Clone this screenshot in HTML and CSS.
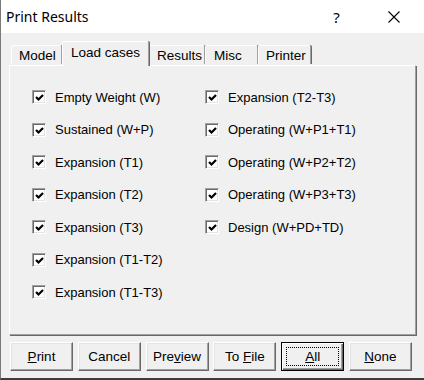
FILE: index.html
```html
<!DOCTYPE html>
<html lang="en">

<head>
    <meta charset="UTF-8">
    <title>Print Results</title>
    <link rel="stylesheet" href="styles.css">
</head>

<body>
    <div class="window">
        <div class="titlebar">
            <span class="title">Print Results</span>
            <div class="caption-btns">
                <span class="cap help">?</span>
                <span class="cap close">
                    <svg width="12" height="12" viewBox="0 0 12 12">
                        <path d="M0.5 0.5 L11.5 11.5 M11.5 0.5 L0.5 11.5" stroke="#000" stroke-width="1.1" fill="none"/>
                    </svg>
                </span>
            </div>
        </div>

        <div class="content">
            <div class="tabs">
                <div class="tab w-model">Model</div>
                <div class="tab active w-load">Load cases</div>
                <div class="tab w-results">Results</div>
                <div class="tab w-misc">Misc</div>
                <div class="tab w-printer">Printer</div>
            </div>

            <div class="panel">
                <div class="checks">
                    <label class="check"><span class="box"><svg width="9" height="9" viewBox="0 0 9 9"><polyline points="1,4 3.5,6.5 8,2" fill="none" stroke="#000" stroke-width="2.2"/></svg></span>Empty Weight (W)</label>
                    <label class="check"><span class="box"><svg width="9" height="9" viewBox="0 0 9 9"><polyline points="1,4 3.5,6.5 8,2" fill="none" stroke="#000" stroke-width="2.2"/></svg></span>Expansion (T2-T3)</label>
                    <label class="check"><span class="box"><svg width="9" height="9" viewBox="0 0 9 9"><polyline points="1,4 3.5,6.5 8,2" fill="none" stroke="#000" stroke-width="2.2"/></svg></span>Sustained (W+P)</label>
                    <label class="check"><span class="box"><svg width="9" height="9" viewBox="0 0 9 9"><polyline points="1,4 3.5,6.5 8,2" fill="none" stroke="#000" stroke-width="2.2"/></svg></span>Operating (W+P1+T1)</label>
                    <label class="check"><span class="box"><svg width="9" height="9" viewBox="0 0 9 9"><polyline points="1,4 3.5,6.5 8,2" fill="none" stroke="#000" stroke-width="2.2"/></svg></span>Expansion (T1)</label>
                    <label class="check"><span class="box"><svg width="9" height="9" viewBox="0 0 9 9"><polyline points="1,4 3.5,6.5 8,2" fill="none" stroke="#000" stroke-width="2.2"/></svg></span>Operating (W+P2+T2)</label>
                    <label class="check"><span class="box"><svg width="9" height="9" viewBox="0 0 9 9"><polyline points="1,4 3.5,6.5 8,2" fill="none" stroke="#000" stroke-width="2.2"/></svg></span>Expansion (T2)</label>
                    <label class="check"><span class="box"><svg width="9" height="9" viewBox="0 0 9 9"><polyline points="1,4 3.5,6.5 8,2" fill="none" stroke="#000" stroke-width="2.2"/></svg></span>Operating (W+P3+T3)</label>
                    <label class="check"><span class="box"><svg width="9" height="9" viewBox="0 0 9 9"><polyline points="1,4 3.5,6.5 8,2" fill="none" stroke="#000" stroke-width="2.2"/></svg></span>Expansion (T3)</label>
                    <label class="check"><span class="box"><svg width="9" height="9" viewBox="0 0 9 9"><polyline points="1,4 3.5,6.5 8,2" fill="none" stroke="#000" stroke-width="2.2"/></svg></span>Design (W+PD+TD)</label>
                    <label class="check"><span class="box"><svg width="9" height="9" viewBox="0 0 9 9"><polyline points="1,4 3.5,6.5 8,2" fill="none" stroke="#000" stroke-width="2.2"/></svg></span>Expansion (T1-T2)</label>
                    <span></span>
                    <label class="check"><span class="box"><svg width="9" height="9" viewBox="0 0 9 9"><polyline points="1,4 3.5,6.5 8,2" fill="none" stroke="#000" stroke-width="2.2"/></svg></span>Expansion (T1-T3)</label>
                </div>
            </div>

            <div class="buttons">
                <button class="btn"><u>P</u>rint</button>
                <button class="btn">Cancel</button>
                <button class="btn">Pre<u>v</u>iew</button>
                <button class="btn">To <u>F</u>ile</button>
                <button class="btn default"><span class="focus"><u>A</u>ll</span></button>
                <button class="btn"><u>N</u>one</button>
            </div>
        </div>
    </div>
</body>

</html>
```

FILE: styles.css
```css
body {
    margin: 0;
    background-color: #f0f0f0;
}

.window {
    width: 424px;
    height: 380px;
    box-sizing: border-box;
    border-left: 1px solid #7a7a7a;
    border-bottom: 2px solid #3c3c3c;
    display: flex;
    flex-direction: column;
    background-color: #f0f0f0;
    font-family: "Liberation Sans", Arial, sans-serif;
    font-size: 13px;
    color: #000;
}

.titlebar {
    height: 33px;
    flex: none;
    background-color: #fff;
    display: flex;
    align-items: center;
    padding-left: 5px;
}

.title {
    font-family: "Noto Sans", sans-serif;
    font-size: 14px;
    margin-top: -1px;
}

.caption-btns {
    margin-left: auto;
    display: flex;
    padding-right: 2px;
}

.cap {
    width: 57px;
    height: 33px;
    display: flex;
    align-items: center;
    justify-content: center;
}

.help {
    font-family: "Noto Sans", sans-serif;
    font-size: 15px;
}

.content {
    flex: 1;
    padding: 9px 0 0 8px;
}

.tabs {
    display: flex;
    align-items: flex-end;
    height: 23px;
    margin-left: 2px;
    position: relative;
    z-index: 1;
    font-size: 13.5px;
}

.tab {
    height: 19px;
    box-sizing: border-box;
    padding: 2px 0 0 7px;
    border-top: 1px solid #fff;
    border-left: 1px solid #fff;
    border-right: 1px solid #a0a0a0;
    box-shadow: 1px 0 0 #696969;
    border-radius: 2px 2px 0 0;
    background-color: #f0f0f0;
    margin-bottom: 1px;
}

.tab.active {
    height: 25px;
    padding-top: 3px;
    margin-bottom: -1px;
    position: relative;
    z-index: 2;
}

.w-model { width: 51px; }
.w-load { width: 87px; padding-left: 8px; }
.w-results { width: 56px; }
.w-misc { width: 53px; padding-left: 8px; }
.w-printer { width: 53px; }

.panel {
    width: 407px;
    height: 270px;
    box-sizing: border-box;
    border: 1px solid;
    border-color: #fff #a0a0a0 #a0a0a0 #fff;
    box-shadow: 1px 1px 0 #696969;
}

.checks {
    display: grid;
    grid-template-columns: 173px 173px;
    grid-auto-rows: 32.5px;
    padding: 15px 0 0 22px;
}

.check {
    display: flex;
    align-items: center;
}

.box {
    width: 14px;
    height: 14px;
    box-sizing: border-box;
    border: 1px solid;
    border-color: #a0a0a0 #fff #fff #a0a0a0;
    box-shadow: inset 1px 1px 0 #696969, inset -1px -1px 0 #e3e3e3;
    background-color: #fff;
    margin-right: 9px;
    display: flex;
    align-items: center;
    justify-content: center;
}

.box svg {
    margin: 1px 0 0 1px;
}

.buttons {
    display: flex;
    justify-content: space-between;
    width: 402px;
    margin: 7px 0 0 1px;
}

.btn {
    width: 63px;
    height: 29px;
    padding: 0;
    font-family: "Liberation Sans", Arial, sans-serif;
    font-size: 13.5px;
    color: #000;
    background-color: #f0f0f0;
    border: 1px solid;
    border-color: #fff #696969 #696969 #fff;
    box-shadow: inset -1px -1px 0 #a0a0a0, inset 1px 1px 0 #e3e3e3;
}

.btn.default {
    border: 1px solid #000;
    box-shadow: inset 1px 1px 0 #fff, inset -1px -1px 0 #696969, inset -2px -2px 0 #a0a0a0;
    display: flex;
    align-items: center;
    justify-content: center;
}

.focus {
    width: 53px;
    height: 19px;
    box-sizing: border-box;
    border: 1px dotted #000;
    display: flex;
    align-items: center;
    justify-content: center;
}
```
